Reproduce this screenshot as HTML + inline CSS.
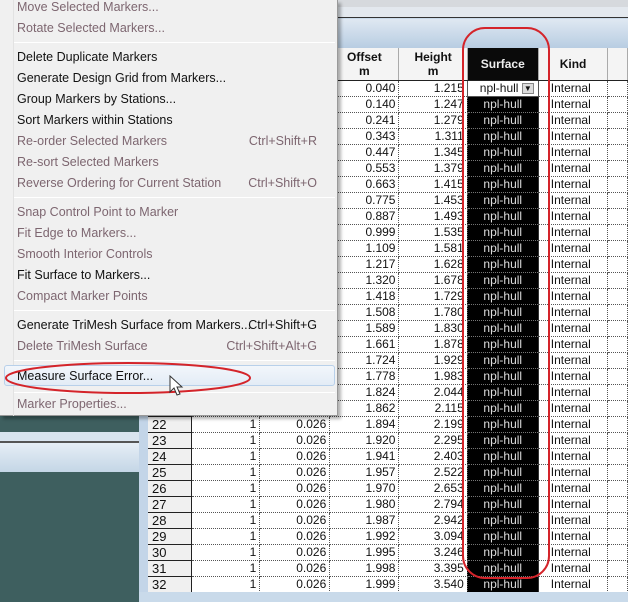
<!DOCTYPE html>
<html><head><meta charset="utf-8"><style>
*{margin:0;padding:0;box-sizing:border-box}
body{width:628px;height:602px;overflow:hidden;position:relative;background:#c9daea;font-family:"Liberation Sans",Arial,sans-serif}
.abs{position:absolute}
#grid{position:absolute;left:148px;top:48px;border-collapse:collapse;table-layout:fixed;font-size:12px}
#grid td{height:16px;border-right:1px dotted #555;border-bottom:1px dotted #555;padding:0 3px;text-align:right;color:#111;white-space:nowrap;background:#fff;line-height:15px}
#grid td.h{background:#f0f0f0;border:1px solid #222;border-left:none;text-align:left;padding-left:4px;font-size:13px}
#grid td.s{background:#000;color:#ddd;text-align:center;border-right:1px solid #333;border-bottom:1px dotted #777}
#grid td.k{text-align:left;padding-left:12px}
#grid tr.hd td{height:32px;background:#f4f4f4;font-weight:bold;text-align:center;line-height:14px;border-right:1px solid #aaa;border-bottom:1px solid #222;font-size:12px}
#grid tr.hd td.s{background:#0a0a0a;color:#eee}
#menu{position:absolute;left:0;top:0;width:338px;height:416px;background:#f0f0f0;border-right:1px solid #999;border-bottom:1px solid #999;box-shadow:3px 3px 3px rgba(0,0,0,.3);font-family:"Liberation Sans",Arial,sans-serif;font-size:12.5px}
#menu .i{position:absolute;left:17px;right:20px;height:20px;line-height:20px;color:#111}
#menu .d{color:#7d6670}
#menu .i span{position:absolute;right:0}
#menu .sep{position:absolute;left:14px;right:2px;height:1px;background:#d8d8d8;border-bottom:1px solid #fff}
</style></head><body>
<div class="abs" style="left:338px;top:0;width:290px;height:7px;background:#d6d9dd"></div>
<div class="abs" style="left:338px;top:7px;width:290px;height:11px;background:#e3e8ee;border-bottom:1px solid #333"></div>
<div class="abs" style="left:338px;top:19px;width:290px;height:29px;background:linear-gradient(#dfe8f2,#b8cde2)"></div>
<div class="abs" style="left:0;top:415px;width:139px;height:187px;background:#3e5f5f"></div>
<div class="abs" style="left:0;top:432px;width:139px;height:10px;background:#d8e4ef"></div>
<div class="abs" style="left:0;top:441px;width:139px;height:2px;background:#555"></div>
<div class="abs" style="left:0;top:443px;width:139px;height:29px;background:linear-gradient(#e6eef6,#c4d6e6)"></div>
<div class="abs" style="left:139px;top:48px;width:9px;height:554px;background:#c3d5e8"></div>
<table id="grid">
<colgroup><col style="width:44px"><col style="width:70px"><col style="width:71px"><col style="width:70px"><col style="width:69px"><col style="width:71px"><col style="width:70px"><col style="width:20px"></colgroup>
<tr class="hd"><td></td><td></td><td></td><td>Offset<br>m</td><td>Height<br>m</td><td class="s">Surface</td><td>Kind</td><td></td></tr>
<tr><td class="h">1</td><td>1</td><td>0.026</td><td>0.040</td><td>1.215</td><td style="background:#fff;color:#111;text-align:left;padding-left:12px;border:1px solid #555">npl-hull <span style="display:inline-block;width:12px;height:11px;background:#ddd;border:1px solid #888;font-size:8px;text-align:center;line-height:10px;vertical-align:middle">▼</span></td><td class="k">Internal</td><td></td></tr>
<tr><td class="h">2</td><td>1</td><td>0.026</td><td>0.140</td><td>1.247</td><td class="s">npl-hull</td><td class="k">Internal</td><td></td></tr>
<tr><td class="h">3</td><td>1</td><td>0.026</td><td>0.241</td><td>1.279</td><td class="s">npl-hull</td><td class="k">Internal</td><td></td></tr>
<tr><td class="h">4</td><td>1</td><td>0.026</td><td>0.343</td><td>1.311</td><td class="s">npl-hull</td><td class="k">Internal</td><td></td></tr>
<tr><td class="h">5</td><td>1</td><td>0.026</td><td>0.447</td><td>1.345</td><td class="s">npl-hull</td><td class="k">Internal</td><td></td></tr>
<tr><td class="h">6</td><td>1</td><td>0.026</td><td>0.553</td><td>1.379</td><td class="s">npl-hull</td><td class="k">Internal</td><td></td></tr>
<tr><td class="h">7</td><td>1</td><td>0.026</td><td>0.663</td><td>1.415</td><td class="s">npl-hull</td><td class="k">Internal</td><td></td></tr>
<tr><td class="h">8</td><td>1</td><td>0.026</td><td>0.775</td><td>1.453</td><td class="s">npl-hull</td><td class="k">Internal</td><td></td></tr>
<tr><td class="h">9</td><td>1</td><td>0.026</td><td>0.887</td><td>1.493</td><td class="s">npl-hull</td><td class="k">Internal</td><td></td></tr>
<tr><td class="h">10</td><td>1</td><td>0.026</td><td>0.999</td><td>1.535</td><td class="s">npl-hull</td><td class="k">Internal</td><td></td></tr>
<tr><td class="h">11</td><td>1</td><td>0.026</td><td>1.109</td><td>1.581</td><td class="s">npl-hull</td><td class="k">Internal</td><td></td></tr>
<tr><td class="h">12</td><td>1</td><td>0.026</td><td>1.217</td><td>1.628</td><td class="s">npl-hull</td><td class="k">Internal</td><td></td></tr>
<tr><td class="h">13</td><td>1</td><td>0.026</td><td>1.320</td><td>1.678</td><td class="s">npl-hull</td><td class="k">Internal</td><td></td></tr>
<tr><td class="h">14</td><td>1</td><td>0.026</td><td>1.418</td><td>1.729</td><td class="s">npl-hull</td><td class="k">Internal</td><td></td></tr>
<tr><td class="h">15</td><td>1</td><td>0.026</td><td>1.508</td><td>1.780</td><td class="s">npl-hull</td><td class="k">Internal</td><td></td></tr>
<tr><td class="h">16</td><td>1</td><td>0.026</td><td>1.589</td><td>1.830</td><td class="s">npl-hull</td><td class="k">Internal</td><td></td></tr>
<tr><td class="h">17</td><td>1</td><td>0.026</td><td>1.661</td><td>1.878</td><td class="s">npl-hull</td><td class="k">Internal</td><td></td></tr>
<tr><td class="h">18</td><td>1</td><td>0.026</td><td>1.724</td><td>1.929</td><td class="s">npl-hull</td><td class="k">Internal</td><td></td></tr>
<tr><td class="h">19</td><td>1</td><td>0.026</td><td>1.778</td><td>1.983</td><td class="s">npl-hull</td><td class="k">Internal</td><td></td></tr>
<tr><td class="h">20</td><td>1</td><td>0.026</td><td>1.824</td><td>2.044</td><td class="s">npl-hull</td><td class="k">Internal</td><td></td></tr>
<tr><td class="h">21</td><td>1</td><td>0.026</td><td>1.862</td><td>2.115</td><td class="s">npl-hull</td><td class="k">Internal</td><td></td></tr>
<tr><td class="h">22</td><td>1</td><td>0.026</td><td>1.894</td><td>2.199</td><td class="s">npl-hull</td><td class="k">Internal</td><td></td></tr>
<tr><td class="h">23</td><td>1</td><td>0.026</td><td>1.920</td><td>2.295</td><td class="s">npl-hull</td><td class="k">Internal</td><td></td></tr>
<tr><td class="h">24</td><td>1</td><td>0.026</td><td>1.941</td><td>2.403</td><td class="s">npl-hull</td><td class="k">Internal</td><td></td></tr>
<tr><td class="h">25</td><td>1</td><td>0.026</td><td>1.957</td><td>2.522</td><td class="s">npl-hull</td><td class="k">Internal</td><td></td></tr>
<tr><td class="h">26</td><td>1</td><td>0.026</td><td>1.970</td><td>2.653</td><td class="s">npl-hull</td><td class="k">Internal</td><td></td></tr>
<tr><td class="h">27</td><td>1</td><td>0.026</td><td>1.980</td><td>2.794</td><td class="s">npl-hull</td><td class="k">Internal</td><td></td></tr>
<tr><td class="h">28</td><td>1</td><td>0.026</td><td>1.987</td><td>2.942</td><td class="s">npl-hull</td><td class="k">Internal</td><td></td></tr>
<tr><td class="h">29</td><td>1</td><td>0.026</td><td>1.992</td><td>3.094</td><td class="s">npl-hull</td><td class="k">Internal</td><td></td></tr>
<tr><td class="h">30</td><td>1</td><td>0.026</td><td>1.995</td><td>3.246</td><td class="s">npl-hull</td><td class="k">Internal</td><td></td></tr>
<tr><td class="h">31</td><td>1</td><td>0.026</td><td>1.998</td><td>3.395</td><td class="s">npl-hull</td><td class="k">Internal</td><td></td></tr>
<tr><td class="h">32</td><td>1</td><td>0.026</td><td>1.999</td><td>3.540</td><td class="s">npl-hull</td><td class="k">Internal</td><td></td></tr>
</table>
<div class="abs" style="left:139px;top:592px;width:489px;height:10px;background:#c9daea"></div>

<div id="menu">
<div class="abs" style="left:13px;top:0;width:1px;height:416px;background:#e2e2e2"></div>
<div class="i d" style="top:-3px">Move Selected Markers...</div>
<div class="i d" style="top:18px">Rotate Selected Markers...</div>
<div class="sep" style="top:42px"></div>
<div class="i" style="top:47px">Delete Duplicate Markers</div>
<div class="i" style="top:68px">Generate Design Grid from Markers...</div>
<div class="i" style="top:89px">Group Markers by Stations...</div>
<div class="i" style="top:110px">Sort Markers within Stations</div>
<div class="i d" style="top:131px">Re-order Selected Markers<span>Ctrl+Shift+R</span></div>
<div class="i d" style="top:152px">Re-sort Selected Markers</div>
<div class="i d" style="top:173px">Reverse Ordering for Current Station<span>Ctrl+Shift+O</span></div>
<div class="sep" style="top:197px"></div>
<div class="i d" style="top:202px">Snap Control Point to Marker</div>
<div class="i d" style="top:223px">Fit Edge to Markers...</div>
<div class="i d" style="top:244px">Smooth Interior Controls</div>
<div class="i" style="top:265px">Fit Surface to Markers...</div>
<div class="i d" style="top:286px">Compact Marker Points</div>
<div class="sep" style="top:310px"></div>
<div class="i" style="top:315px">Generate TriMesh Surface from Markers...<span>Ctrl+Shift+G</span></div>
<div class="i d" style="top:336px">Delete TriMesh Surface<span>Ctrl+Shift+Alt+G</span></div>
<div class="sep" style="top:360px"></div>
<div class="abs" style="left:4px;top:365px;width:331px;height:21px;background:linear-gradient(#f2f6fb,#e3ecf6);border:1px solid #b8d0ea;border-radius:3px"></div>
<div class="i" style="top:366px">Measure Surface Error...</div>
<div class="sep" style="top:392px"></div>
<div class="i d" style="top:394px">Marker Properties...</div>
</div>

<svg class="abs" style="left:0;top:0" width="628" height="602">
<rect x="463" y="28" width="86" height="550" rx="22" fill="none" stroke="#d4242a" stroke-width="2"/>
<ellipse cx="128" cy="378" rx="122" ry="15" fill="none" stroke="#d4242a" stroke-width="2"/>
<path d="M170 376 L170 392 L174 388 L177 395 L180 394 L177 387 L182 387 Z" fill="#fff" stroke="#333" stroke-width="1"/>
</svg>
</body></html>
